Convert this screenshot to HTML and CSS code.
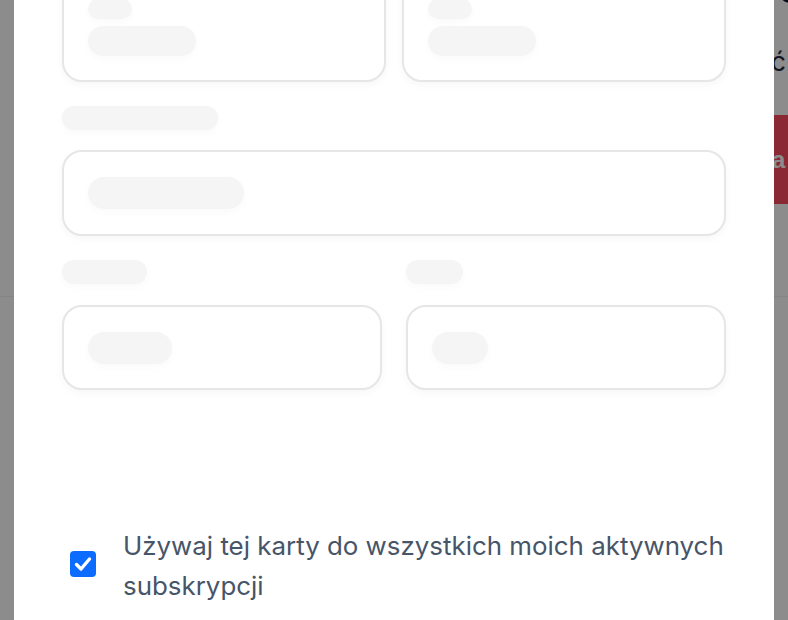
FILE: index.html
```html
<!DOCTYPE html>
<html lang="pl">
<head>
<meta charset="utf-8">
<title>Karta płatnicza</title>
<link rel="stylesheet" href="styles.css">
</head>
<body>
  <div class="page">
    <header class="page-head">
      <div class="page-side">
        <span class="avatar"></span>
        <span class="side-link">ć</span>
        <button class="side-btn">a</button>
      </div>
    </header>
  </div>

  <div class="backdrop"></div>

  <section class="modal">
    <div class="modal-body">
      <div class="row row-top">
        <div class="field">
          <span class="sk sk-a"></span>
          <span class="sk sk-b"></span>
        </div>
        <div class="field">
          <span class="sk sk-a"></span>
          <span class="sk sk-b"></span>
        </div>
      </div>

      <span class="sk sk-label sk-label-wide"></span>
      <div class="field field-single">
        <span class="sk sk-input sk-input-wide"></span>
      </div>

      <div class="row row-split">
        <div class="col">
          <span class="sk sk-label sk-label-mid"></span>
          <div class="field field-single">
            <span class="sk sk-input sk-input-mid"></span>
          </div>
        </div>
        <div class="col">
          <span class="sk sk-label sk-label-short"></span>
          <div class="field field-single">
            <span class="sk sk-input sk-input-short"></span>
          </div>
        </div>
      </div>

      <label class="check-row">
        <span class="check-box">
          <svg viewBox="0 0 26 26" width="26" height="26" aria-hidden="true">
            <path d="M6.5 13.5 L11 18 L19.5 8" fill="none" stroke="#fff" stroke-width="3.4" stroke-linecap="round" stroke-linejoin="round"/>
          </svg>
        </span>
        <span class="check-text">Używaj tej karty do wszystkich moich aktywnych subskrypcji</span>
      </label>
    </div>
  </section>
</body>
</html>
```
FILE: styles.css
```css
html, body {
  margin: 0;
  height: 100%;
  overflow: hidden;
}

body {
  font-family: Inter, "Noto Sans", "Liberation Sans", sans-serif;
  background: #fff;
}

/* page underneath the dialog */
.page {
  height: 100vh;
  background: #fff;
}

.page-head {
  height: 296px;
  border-bottom: 1px solid #f0f0f0;
  display: flex;
  justify-content: flex-end;
}

.page-side {
  width: 14px;
  display: flex;
  flex-direction: column;
  align-items: flex-start;
}

.avatar {
  width: 22px;
  height: 22px;
  margin-top: -19px;
  margin-left: 5px;
  border-radius: 50%;
  background: #0f172a;
  flex: none;
}

.side-link {
  margin-top: 44px;
  margin-left: -3px;
  font-size: 26px;
  line-height: 30px;
  color: #1e293b;
}

.side-btn {
  margin-top: 38px;
  width: 120px;
  height: 89px;
  flex: none;
  border: 0;
  padding: 0;
  background: #fc4a5e;
  color: #fff;
  font: 700 24px/1 "Liberation Sans", Arial, sans-serif;
  text-align: left;
  text-indent: -2px;
}

.backdrop {
  position: fixed;
  inset: 0;
  background: rgba(0, 0, 0, 0.45);
}

/* dialog */
.modal {
  position: fixed;
  top: 0;
  bottom: 0;
  left: 14px;
  right: 14px;
  background: #fff;
  overflow: hidden;
}

.modal-body {
  padding: 0 48px;
  margin-top: -28px;
  display: flex;
  flex-direction: column;
}

.row {
  display: grid;
  grid-template-columns: 1fr 1fr;
}

.row-top {
  column-gap: 16px;
}

.row-split {
  column-gap: 24px;
  margin-top: 24px;
}

.col {
  display: flex;
  flex-direction: column;
}

.field {
  border: 2px solid #e6e6e6;
  border-radius: 20px;
  background: #fff;
  box-shadow: 0 3px 8px rgba(0, 0, 0, 0.035);
  padding: 25px 24px;
  display: flex;
  flex-direction: column;
  align-items: flex-start;
}

.field-single {
  padding: 0 24px;
  height: 85px;
  box-sizing: border-box;
  justify-content: center;
}

.row-top .field {
  gap: 7px;
  padding: 25px 24px 24px;
}

/* skeleton placeholders */
.sk {
  display: block;
  background: #f5f5f5;
  border-radius: 999px;
  box-shadow: 0 3px 8px rgba(0, 0, 0, 0.025);
}

.sk-a { width: 44px; height: 20px; }
.sk-b { width: 108px; height: 30px; }

.sk-label {
  height: 24px;
  margin-bottom: 21px;
}

.modal-body > .sk-label {
  margin-top: 24px;
  margin-bottom: 20px;
}

.sk-label-wide { width: 156px; }
.sk-label-mid { width: 85px; }
.sk-label-short { width: 57px; }

.sk-input { height: 32px; }
.sk-input-wide { width: 156px; }
.sk-input-mid { width: 84px; }
.sk-input-short { width: 56px; }

.modal-body > .field-single {
  height: 86px;
}

/* subscription checkbox */
.check-row {
  margin-top: 136px;
  margin-right: -12px;
  padding-left: 8px;
  display: flex;
  align-items: center;
  gap: 27px;
}

.check-box {
  width: 26px;
  height: 26px;
  flex: none;
  border-radius: 4px;
  background: #0b6cff;
  display: flex;
  position: relative;
  top: -2px;
}

.check-text {
  font-size: 25.9px;
  line-height: 40px;
  color: #475569;
}
```
